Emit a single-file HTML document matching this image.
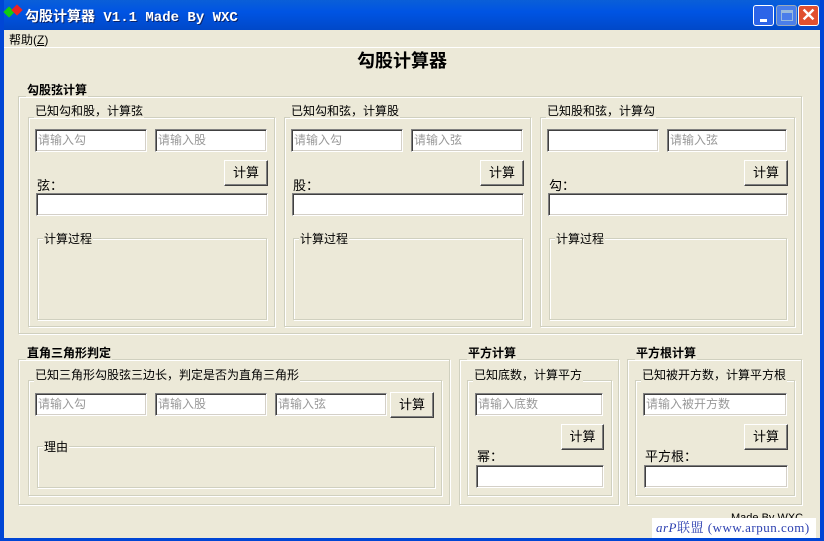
<!DOCTYPE html>
<html><head><meta charset="utf-8"><style>
*{margin:0;padding:0;box-sizing:border-box}
body{width:824px;height:541px;overflow:hidden;background:#ECE9D8;position:relative;font-family:"Liberation Sans","Noto Sans CJK SC","WenQuanYi Zen Hei",sans-serif;font-size:12px;color:#000}
.a{position:absolute}
.g{position:absolute;border:1px solid #D0D0BF;box-shadow:1px 1px 0 #fff, inset 1px 1px 0 #fff}
.gt{position:absolute;background:#ECE9D8;padding:0 1px;white-space:nowrap;line-height:14px}
.b{font-weight:bold}
.t{position:absolute;background:#fff;border:1px solid;border-color:#808080 #fff #fff #808080;box-shadow:inset 1px 1px 0 #404040,inset -1px -1px 0 #D4D0C8;color:#999;font-size:12px;line-height:21px;padding-left:2px;white-space:nowrap;overflow:hidden}
.btn{position:absolute;border:1px solid;border-color:#fff #404040 #404040 #fff;box-shadow:inset -1px -1px 0 #808080;background:#ECE9D8;text-align:center;font-size:13px;line-height:23px}
.l{position:absolute;font-size:13px;white-space:nowrap}
</style></head><body>
<div class="a" style="left:0;top:0;width:824px;height:30px;background:linear-gradient(#0A5FD8,#0054E3 40%,#0048C8)"></div>
<div class="a" style="left:0;top:0;width:4px;height:541px;background:#0046D5"></div>
<div class="a" style="left:820px;top:0;width:4px;height:541px;background:#0046D5"></div>
<div class="a" style="left:0;top:538px;width:824px;height:3px;background:#0046D5"></div>
<div class="a" style="left:5px;top:8px;width:8px;height:8px;background:#1c1;transform:rotate(45deg)"></div>
<div class="a" style="left:13px;top:6px;width:8px;height:8px;background:#e22;transform:rotate(45deg)"></div>
<div class="a" style="left:25px;top:6px;color:#fff;font-weight:bold;font-size:14px;font-family:'Liberation Mono','Noto Sans CJK SC',monospace;text-shadow:1px 1px 0 #0a246a;white-space:nowrap">勾股计算器 V1.1 Made By WXC</div>
<div class="a" style="left:753px;top:5px;width:21px;height:21px;border:1px solid #fff;border-radius:3px;background:#2C64E8"><div class="a" style="left:6px;top:13px;width:7px;height:3px;background:#fff"></div></div>
<div class="a" style="left:776px;top:5px;width:21px;height:21px;border:1px solid #9ab;border-radius:3px;background:#4A7EEA"><div class="a" style="left:4px;top:4px;width:12px;height:11px;border:1px solid #9bd;border-top-width:3px"></div></div>
<div class="a" style="left:798px;top:5px;width:21px;height:21px;border:1px solid #fff;border-radius:3px;background:#E05030;color:#fff;font-size:18px;line-height:18px;text-align:center;font-weight:bold">✕</div>
<div class="a" style="left:9px;top:31px;font-size:12px">帮助(<u>Z</u>)</div>
<div class="a" style="left:4px;top:47px;width:816px;height:1px;background:#fff"></div>
<div class="a b" style="left:357px;top:47px;font-size:18px">勾股计算器</div>

<div class="g" style="left:18px;top:96px;width:784px;height:238px"></div>
<div class="gt b" style="left:26px;top:83px">勾股弦计算</div>

<div class="g" style="left:28px;top:117px;width:247px;height:210px"></div>
<div class="gt" style="left:34px;top:104px">已知勾和股，计算弦</div>
<div class="t" style="left:35px;top:129px;width:112px;height:23px">请输入勾</div>
<div class="t" style="left:155px;top:129px;width:112px;height:23px">请输入股</div>
<div class="btn" style="left:224px;top:160px;width:44px;height:26px">计算</div>
<div class="l" style="left:37px;top:175px">弦：</div>
<div class="t" style="left:36px;top:193px;width:232px;height:23px"></div>
<div class="g" style="left:37px;top:238px;width:230px;height:82px"></div>
<div class="gt" style="left:43px;top:232px">计算过程</div>

<div class="g" style="left:284px;top:117px;width:247px;height:210px"></div>
<div class="gt" style="left:290px;top:104px">已知勾和弦，计算股</div>
<div class="t" style="left:291px;top:129px;width:112px;height:23px">请输入勾</div>
<div class="t" style="left:411px;top:129px;width:112px;height:23px">请输入弦</div>
<div class="btn" style="left:480px;top:160px;width:44px;height:26px">计算</div>
<div class="l" style="left:293px;top:175px">股：</div>
<div class="t" style="left:292px;top:193px;width:232px;height:23px"></div>
<div class="g" style="left:293px;top:238px;width:230px;height:82px"></div>
<div class="gt" style="left:299px;top:232px">计算过程</div>

<div class="g" style="left:540px;top:117px;width:255px;height:210px"></div>
<div class="gt" style="left:546px;top:104px">已知股和弦，计算勾</div>
<div class="t" style="left:547px;top:129px;width:112px;height:23px"></div>
<div class="t" style="left:667px;top:129px;width:120px;height:23px">请输入弦</div>
<div class="btn" style="left:744px;top:160px;width:44px;height:26px">计算</div>
<div class="l" style="left:549px;top:175px">勾：</div>
<div class="t" style="left:548px;top:193px;width:240px;height:23px"></div>
<div class="g" style="left:549px;top:238px;width:238px;height:82px"></div>
<div class="gt" style="left:555px;top:232px">计算过程</div>

<div class="g" style="left:18px;top:359px;width:432px;height:146px"></div>
<div class="gt b" style="left:26px;top:346px">直角三角形判定</div>
<div class="g" style="left:28px;top:380px;width:414px;height:116px"></div>
<div class="gt" style="left:34px;top:368px">已知三角形勾股弦三边长，判定是否为直角三角形</div>
<div class="t" style="left:35px;top:393px;width:112px;height:23px">请输入勾</div>
<div class="t" style="left:155px;top:393px;width:112px;height:23px">请输入股</div>
<div class="t" style="left:275px;top:393px;width:112px;height:23px">请输入弦</div>
<div class="btn" style="left:390px;top:392px;width:44px;height:26px">计算</div>
<div class="g" style="left:37px;top:446px;width:398px;height:42px"></div>
<div class="gt" style="left:43px;top:440px">理由</div>

<div class="g" style="left:459px;top:359px;width:160px;height:146px"></div>
<div class="gt b" style="left:467px;top:346px">平方计算</div>
<div class="g" style="left:467px;top:380px;width:145px;height:116px"></div>
<div class="gt" style="left:473px;top:368px">已知底数，计算平方</div>
<div class="t" style="left:475px;top:393px;width:128px;height:23px">请输入底数</div>
<div class="btn" style="left:561px;top:424px;width:43px;height:26px">计算</div>
<div class="l" style="left:477px;top:446px">幂：</div>
<div class="t" style="left:476px;top:465px;width:128px;height:23px"></div>

<div class="g" style="left:627px;top:359px;width:175px;height:146px"></div>
<div class="gt b" style="left:635px;top:346px">平方根计算</div>
<div class="g" style="left:635px;top:380px;width:160px;height:116px"></div>
<div class="gt" style="left:641px;top:368px">已知被开方数，计算平方根</div>
<div class="t" style="left:643px;top:393px;width:144px;height:23px">请输入被开方数</div>
<div class="btn" style="left:744px;top:424px;width:44px;height:26px">计算</div>
<div class="l" style="left:645px;top:446px">平方根：</div>
<div class="t" style="left:644px;top:465px;width:144px;height:23px"></div>

<div class="a" style="left:731px;top:512px;font-size:11px;white-space:nowrap">Made By WXC</div>
<div class="a" style="left:652px;top:518px;width:164px;height:20px;background:#fff;color:#2B3FB0;font-family:'Liberation Serif','Noto Serif CJK SC',serif;font-size:13px;line-height:20px;padding-left:4px;letter-spacing:0.5px;white-space:nowrap"><i>arP</i>联盟 (www.arpun.com)</div>
</body></html>
